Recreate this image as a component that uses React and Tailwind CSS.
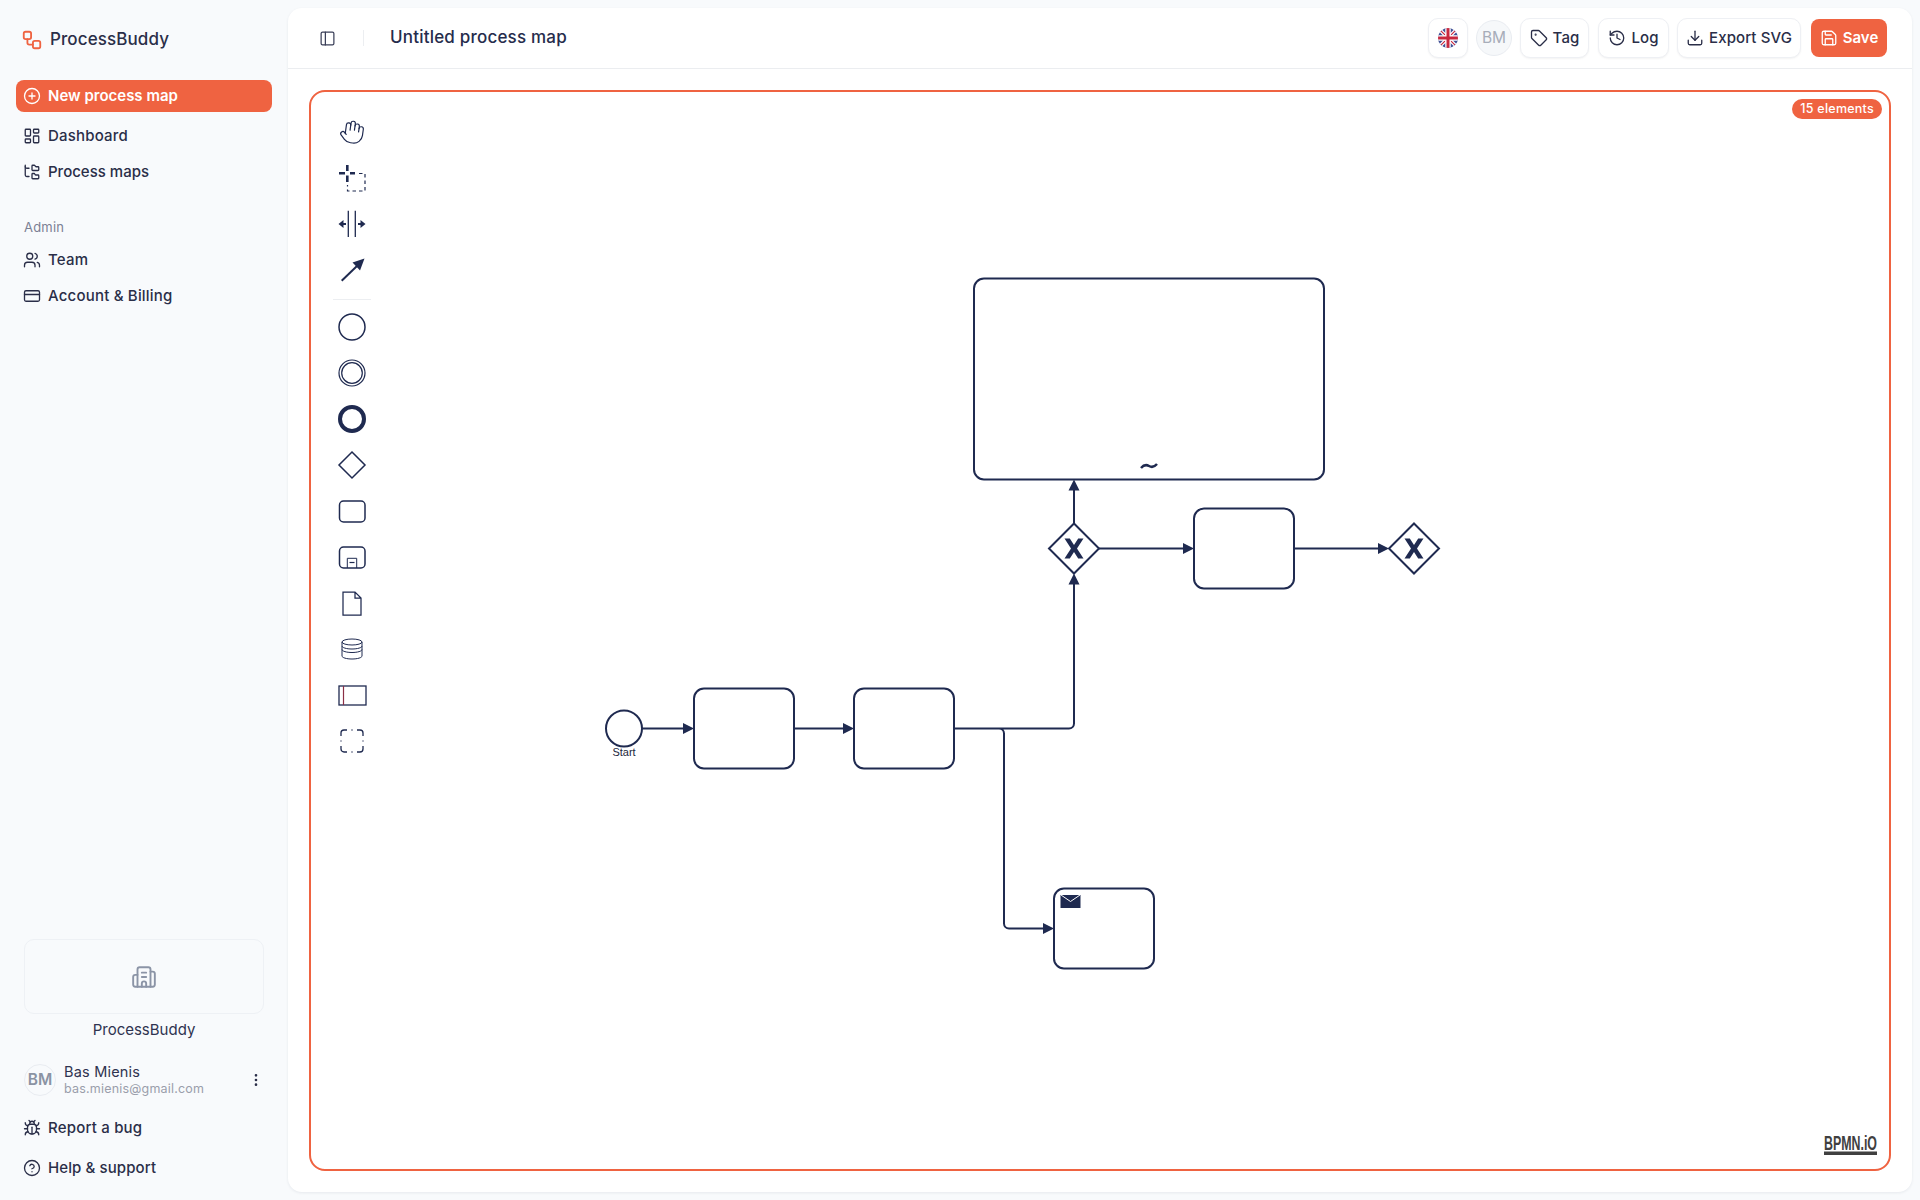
import {
  Bug, Building2, CircleHelp, CirclePlus, CreditCard, Download, EllipsisVertical, FolderTree,
  Hand, History, LayoutDashboard, PanelLeft, Save, Tag, Users, Workflow,
} from 'lucide-react';

const NAVY = '#1f2a50';

function NavRow({ icon: Icon, label, tracking = 'tracking-[0.2px]' }) {
  return (
    <a className={`flex h-9 items-center gap-[7px] pl-[7px] pr-2 text-[15px] font-medium text-[#2a2e48] ${tracking}`}>
      <Icon size={18} strokeWidth={1.75} className="shrink-0" />
      {label}
    </a>
  );
}

function Sidebar() {
  return (
    <aside className="flex w-[288px] shrink-0 flex-col px-4 pb-[14px] pt-5">
      <div className="mb-[22px] flex h-[38px] translate-y-px items-center gap-[7px] pl-[5px]">
        <Workflow size={22} strokeWidth={2} className="shrink-0 text-[#ef6341]" />
        <span className="text-[17px] font-medium tracking-[0.1px] text-[#2a2e48]">ProcessBuddy</span>
      </div>
      <button type="button" className="flex h-8 items-center gap-[7px] rounded-lg bg-[#ef6341] pl-[7px] pr-2 text-[15px] font-semibold text-white">
        <CirclePlus size={18} strokeWidth={1.75} />
        New process map
      </button>
      <nav className="mt-[6px] flex flex-col">
        <NavRow icon={LayoutDashboard} label="Dashboard" />
        <NavRow icon={FolderTree} label="Process maps" tracking="tracking-[0px]" />
      </nav>
      <p className="mt-6 flex h-7 items-center px-2 text-[13px] tracking-[0.2px] text-[#7b8094]">Admin</p>
      <nav className="flex flex-col">
        <NavRow icon={Users} label="Team" />
        <NavRow icon={CreditCard} label="Account & Billing" />
      </nav>

      <div className="mt-auto px-2">
        <div className="flex h-[75px] items-center justify-center rounded-[10px] border border-[#eef1f5] bg-[#f8fafc]">
          <Building2 size={26} strokeWidth={1.75} className="text-[#8b94a6]" />
        </div>
        <p className="mt-[6px] text-center text-[15px] leading-5 text-[#2f3350]">ProcessBuddy</p>
        <div className="mt-6 flex h-8 items-center gap-2">
          <span className="flex h-8 w-8 shrink-0 items-center justify-center rounded-full border border-[#e9ecf1] bg-[#f8fafc] text-[15.5px] font-semibold text-[#8b93a3]">BM</span>
          <div className="min-w-0 flex-1">
            <p className="text-[14.5px] leading-[18px] tracking-[0.2px] text-[#2f3350]">Bas Mienis</p>
            <p className="text-[12.5px] leading-[16px] tracking-[0.2px] text-[#9a9eab]">bas.mienis@gmail.com</p>
          </div>
          <EllipsisVertical size={16} strokeWidth={2} className="text-[#2a2e48]" />
        </div>
      </div>
      <nav className="mt-[14px] flex flex-col gap-1">
        <NavRow icon={Bug} label="Report a bug" />
        <NavRow icon={CircleHelp} label="Help & support" tracking="tracking-[0.1px]" />
      </nav>
    </aside>
  );
}

function UkFlag() {
  return (
    <svg width="20" height="20" viewBox="0 0 20 20">
      <clipPath id="flag"><circle cx="10" cy="10" r="10" /></clipPath>
      <g clipPath="url(#flag)">
        <rect width="20" height="20" fill="#3f4f95" />
        <path d="M0 0 20 20M20 0 0 20" stroke="#fff" strokeWidth="3.5" />
        <path d="M0 0 20 20M20 0 0 20" stroke="#c8283f" strokeWidth="1.2" />
        <path d="M10 0v20M0 10h20" stroke="#fff" strokeWidth="5.5" />
        <path d="M10 0v20M0 10h20" stroke="#c8283f" strokeWidth="3" />
      </g>
    </svg>
  );
}

function HeaderButton({ icon: Icon, label, className }) {
  return (
    <button type="button" className={`flex h-10 items-center justify-center gap-[5px] rounded-[10px] border border-[#eef0f4] bg-white text-[15px] font-medium tracking-[0.1px] text-[#2a2e48] shadow-xs ${className}`}>
      <Icon size={18} strokeWidth={1.75} />
      {label}
    </button>
  );
}

function Header() {
  return (
    <header className="flex h-[61px] shrink-0 items-center border-b border-[#ebedf0] pl-[31px] pr-[25px]">
      <PanelLeft size={17} strokeWidth={1.75} className="text-[#3a3f58]" />
      <span className="ml-[27px] h-4 w-px bg-[#eceef1]" />
      <h1 className="ml-[26px] text-[17px] font-medium tracking-[0.2px] text-[#262c4c]">Untitled process map</h1>
      <div className="ml-auto flex items-center">
        <span className="flex h-10 w-10 items-center justify-center rounded-[10px] border border-[#eef0f4] bg-white shadow-xs"><UkFlag /></span>
        <span className="ml-2 flex h-9 w-9 items-center justify-center rounded-full border border-[#e9ecf1] bg-[#f6f8fa] text-[15.5px] text-[#a7adb9]">BM</span>
        <HeaderButton icon={Tag} label="Tag" className="ml-2 w-[69px]" />
        <HeaderButton icon={History} label="Log" className="ml-[9px] w-[71px]" />
        <HeaderButton icon={Download} label="Export SVG" className="ml-2 w-[124px]" />
        <button type="button" className="ml-[10px] flex h-[38px] w-[76px] items-center justify-center gap-[5px] rounded-[8px] bg-[#ef6341] text-[15px] font-semibold text-white">
          <Save size={18} strokeWidth={1.75} />
          Save
        </button>
      </div>
    </header>
  );
}

function ToolIcon({ children }) {
  return (
    <svg width="30" height="30" viewBox="0 0 30 30" fill="none" stroke={NAVY} strokeWidth="1.5">
      {children}
    </svg>
  );
}

const TOOLS_TOP = [
  <Hand key="hand" size={26} strokeWidth={1.1} color={NAVY} className="rotate-[8deg]" />,
  <ToolIcon key="lasso">
    <path d="M2 10.3h6M13 10.3h5M10.3 2v6M10.3 12.5v6.5" strokeWidth="2.6" />
    <path d="M22 10.5h6V28H10.5v-6" strokeWidth="1.2" strokeDasharray="3.5 3" />
  </ToolIcon>,
  <ToolIcon key="space">
    <path d="M11.3 1.7V28M18.3 1.7V28" strokeWidth="1.3" />
    <path d="M1.5 15 6.5 11v8zM28.5 15 23.5 11v8z" fill={NAVY} stroke="none" />
    <path d="M5 15h4M21 15h4" strokeWidth="1.8" />
  </ToolIcon>,
  <ToolIcon key="connect">
    <path d="M4.7 25.7 20 11" strokeWidth="2" />
    <path d="M27.5 3.5 15.5 7.5l7.5 8z" fill={NAVY} stroke="none" />
  </ToolIcon>,
];

const TOOLS_BOTTOM = [
  <ToolIcon key="start"><circle cx="15" cy="15" r="13" /></ToolIcon>,
  <ToolIcon key="intermediate"><circle cx="15" cy="15" r="13" strokeWidth="1.2" /><circle cx="15" cy="15" r="10.3" strokeWidth="1.2" /></ToolIcon>,
  <ToolIcon key="end"><circle cx="15" cy="15" r="12" strokeWidth="4" /></ToolIcon>,
  <ToolIcon key="gateway"><path d="M15 2 28 15 15 28 2 15z" /></ToolIcon>,
  <ToolIcon key="task"><rect x="2.5" y="5" width="25.5" height="21" rx="4" /></ToolIcon>,
  <ToolIcon key="subprocess">
    <rect x="2.5" y="5" width="25.5" height="21" rx="4" />
    <path d="M10.3 26v-9.7h9.4V26" strokeWidth="1" />
    <path d="M12.5 20.5h5" strokeWidth="1.2" />
  </ToolIcon>,
  <ToolIcon key="data"><path d="M6 4h12l6 6v17H6zM18 4v6h6" strokeWidth="1.25" /></ToolIcon>,
  <ToolIcon key="store">
    <ellipse cx="15" cy="8" rx="10" ry="3" strokeWidth="1" />
    <path d="M5 8v14c0 1.7 4.5 3 10 3s10-1.3 10-3V8M5 12c0 1.7 4.5 3 10 3s10-1.3 10-3M5 15.5c0 1.7 4.5 3 10 3s10-1.3 10-3" strokeWidth="1" />
  </ToolIcon>,
  <ToolIcon key="pool">
    <rect x="2" y="6" width="27" height="19" strokeWidth="1.3" />
    <path d="M6.5 6v19" stroke="#8b2f45" strokeWidth="1.2" />
  </ToolIcon>,
  <ToolIcon key="group">
    <path d="M4 10V7a3 3 0 0 1 3-3h3M20 4h3a3 3 0 0 1 3 3v3M26 20v3a3 3 0 0 1-3 3h-3M10 26H7a3 3 0 0 1-3-3v-3M14.5 4h1M14.5 26h1M4 14.5v1M26 14.5v1" strokeWidth="1.3" />
  </ToolIcon>,
];

function Toolbar() {
  return (
    <div className="absolute left-[13px] top-[17px] flex w-[56px] flex-col items-center">
      {TOOLS_TOP.map((icon, i) => (
        <div key={i} className="flex h-[46px] w-full items-center justify-center">{icon}</div>
      ))}
      <div className="mb-[4px] mt-[6px] h-px w-[38px] bg-[#eceef1]" />
      {TOOLS_BOTTOM.map((icon, i) => (
        <div key={i} className="flex h-[46px] w-full items-center justify-center">{icon}</div>
      ))}
    </div>
  );
}

function Arrow({ x, y, dir }) {
  const pts = {
    right: `${x},${y} ${x - 11},${y - 5.5} ${x - 11},${y + 5.5}`,
    up: `${x},${y} ${x - 5.5},${y + 11} ${x + 5.5},${y + 11}`,
  };
  return <polygon points={pts[dir]} fill={NAVY} stroke="none" />;
}

function Gateway({ cx, cy }) {
  const marker = [
    [-9.5, -10], [-4.2, -10], [0, -3.4], [4.2, -10], [9.5, -10], [3, 0],
    [9.5, 10], [4.2, 10], [0, 3.4], [-4.2, 10], [-9.5, 10], [-3, 0],
  ].map(([x, y]) => `${cx + x},${cy + y}`).join(' ');
  return (
    <g>
      <path d={`M${cx} ${cy - 25} ${cx + 25} ${cy} ${cx} ${cy + 25} ${cx - 25} ${cy}z`} fill="#fff" />
      <polygon points={marker} fill={NAVY} stroke="none" />
    </g>
  );
}

// page coordinates, shifted into the canvas by the outer group
function Diagram() {
  return (
    <svg className="absolute inset-0 h-full w-full" fill="none" stroke={NAVY} strokeWidth="2">
      <g transform="translate(-311 -91.5)">
        <path d="M642 728H684M794 728H844M954 728H1069a5 5 0 0 0 5-5V583M954 728h45a5 5 0 0 1 5 5V923a5 5 0 0 0 5 5h35M1074 523V489M1099 548h85M1294 548h85" />
        <Arrow x={694} y={728} dir="right" />
        <Arrow x={854} y={728} dir="right" />
        <Arrow x={1054} y={928} dir="right" />
        <Arrow x={1194} y={548} dir="right" />
        <Arrow x={1389} y={548} dir="right" />
        <Arrow x={1074} y={479} dir="up" />
        <Arrow x={1074} y={573} dir="up" />
        <circle cx="624" cy="728" r="18" />
        <text x="624" y="755" textAnchor="middle" fill="#22263c" stroke="none" fontSize="11" fontFamily="'Liberation Sans', Arial, sans-serif">Start</text>
        <rect x="694" y="688" width="100" height="80" rx="10" />
        <rect x="854" y="688" width="100" height="80" rx="10" />
        <rect x="1054" y="888" width="100" height="80" rx="10" />
        <path d="M1060.5 894.5h20v13h-20z" fill={NAVY} stroke="none" />
        <path d="M1061 894.5l9.5 6.5 9.5-6.5" stroke="#fff" strokeWidth="1" />
        <rect x="974" y="278" width="350" height="201" rx="10" />
        <path d="M1141 467.5c3-3.5 5.5-3.5 8-2s5 1.500 8-2" strokeWidth="2.5" />
        <rect x="1194" y="508" width="100" height="80" rx="10" />
        <Gateway cx={1074} cy={548} />
        <Gateway cx={1414} cy={548} />
      </g>
    </svg>
  );
}

function BpmnLogo() {
  return (
    <svg className="absolute bottom-[12px] right-[11px]" width="56" height="26" viewBox="0 0 56 26">
      <text transform="translate(55 18.5) scale(0.59 1)" textAnchor="end" fill="#404040" fontSize="21" fontWeight="700" fontFamily="'Liberation Sans', Arial, sans-serif">BPMN.iO</text>
      <rect x="2" y="20.5" width="53" height="3.5" fill="#404040" />
    </svg>
  );
}

export default function App() {
  return (
    <div className="flex h-screen bg-[#f8fafc] font-[Inter,sans-serif]">
      <Sidebar />
      <main className="my-2 mr-2 flex min-w-0 flex-1 flex-col rounded-[14px] bg-white shadow-[0_1px_3px_rgba(30,41,59,0.08)]">
        <Header />
        <div className="flex-1 p-[21px]">
          <div className="relative h-full rounded-[16px] border-2 border-[#ef6341]">
            <Diagram />
            <Toolbar />
            <span className="absolute right-[7px] top-[7px] flex h-5 items-center rounded-full bg-[#ef6341] px-2 text-[12.5px] font-medium tracking-[0.25px] text-white">15 elements</span>
            <BpmnLogo />
          </div>
        </div>
      </main>
    </div>
  );
}
